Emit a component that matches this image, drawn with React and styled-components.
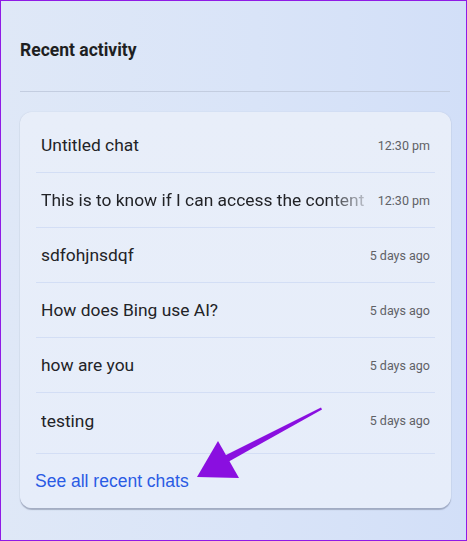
import React from 'react';
import styled, { createGlobalStyle } from 'styled-components';

const GlobalStyle = createGlobalStyle`
    html, body {
        margin: 0;
        padding: 0;
    }
    body {
        font-family: Roboto, "Liberation Sans", sans-serif;
    }
`;

const Frame = styled.div`
    position: relative;
    box-sizing: border-box;
    width: 467px;
    height: 541px;
    border: 1px solid #8f1be6;
    background: linear-gradient(90deg, #dfe8f7 0%, #d9e4f8 55%, #d2dff8 100%);
    padding: 0 16px 0 19px;
    display: flex;
    flex-direction: column;
`;

const Title = styled.h2`
    margin: 0;
    padding: 38px 0 0 0;
    height: 52px;
    line-height: 22px;
    font-family: Roboto, sans-serif;
    font-size: 17.5px;
    font-weight: 700;
    color: #1e1f22;
`;

const Divider = styled.hr`
    border: none;
    height: 1px;
    background-color: #c3cde0;
    margin: 0 0 20px 0;
`;

const Card = styled.div`
    box-sizing: border-box;
    width: 431px;
    border-radius: 12px;
    background: linear-gradient(180deg, #e8eef9 0%, #e6edfa 100%);
    box-shadow: 0 1.5px 1px rgba(120, 130, 155, 0.55), 0 0 1px rgba(150, 160, 185, 0.5);
    padding: 6px 16px 0 16px;
    display: flex;
    flex-direction: column;
`;

const Row = styled.div`
    display: flex;
    align-items: center;
    justify-content: space-between;
    height: 55px;
    padding: 0 5px 0 5px;
    border-bottom: 1px solid #d3def5;
    box-sizing: border-box;

    &:last-child {
        border-bottom: none;
    }
`;

const ChatTitle = styled.span`
    font-family: Roboto, sans-serif;
    font-size: 17.4px;
    color: #222327;
    white-space: nowrap;
    overflow: hidden;
    min-width: 0;
    flex: 1;
    ${(p) => p.$fade && `
        -webkit-mask-image: linear-gradient(90deg, #000 88%, rgba(0,0,0,0.2) 100%);
        mask-image: linear-gradient(90deg, #000 88%, rgba(0,0,0,0.2) 100%);
    `}
`;

const Time = styled.span`
    font-family: Roboto, sans-serif;
    font-size: 12.5px;
    color: #5f6166;
    white-space: nowrap;
    margin-left: 12px;
`;

const Footer = styled.div`
    height: 55px;
    margin-top: 5px;
    border-top: 1px solid #d3def5;
    display: flex;
    align-items: center;
    padding: 0 0 0 0;
    box-sizing: border-box;
`;

const SeeAll = styled.a`
    font-family: "Liberation Sans", Arial, sans-serif;
    font-size: 17.5px;
    margin-left: -1px;
    color: #2a5be4;
    text-decoration: none;
    cursor: pointer;
`;

const ArrowMark = styled.svg`
    position: absolute;
    left: 0;
    top: 0;
    pointer-events: none;
`;

const chats = [
    { title: 'Untitled chat', time: '12:30 pm' },
    { title: 'This is to know if I can access the content', time: '12:30 pm', fade: true },
    { title: 'sdfohjnsdqf', time: '5 days ago' },
    { title: 'How does Bing use AI?', time: '5 days ago' },
    { title: 'how are you', time: '5 days ago' },
    { title: 'testing', time: '5 days ago' },
];

function App() {
    return (
        <>
            <GlobalStyle />
            <Frame>
                <Title>Recent activity</Title>
                <Divider />
                <Card>
                    <div>
                        {chats.map((chat) => (
                            <Row key={chat.title}>
                                <ChatTitle $fade={chat.fade}>{chat.title}</ChatTitle>
                                <Time>{chat.time}</Time>
                            </Row>
                        ))}
                    </div>
                    <Footer>
                        <SeeAll>See all recent chats</SeeAll>
                    </Footer>
                </Card>
                {/* annotation arrow */}
                <ArrowMark width="467" height="541" viewBox="0 0 467 541">
                    <polygon points="320,406.5 321,408.5 227,461 223,455" fill="#8a0fe0" />
                    <polygon points="217,440 196,476 238,477" fill="#8a0fe0" />
                </ArrowMark>
            </Frame>
        </>
    );
}

export default App;
